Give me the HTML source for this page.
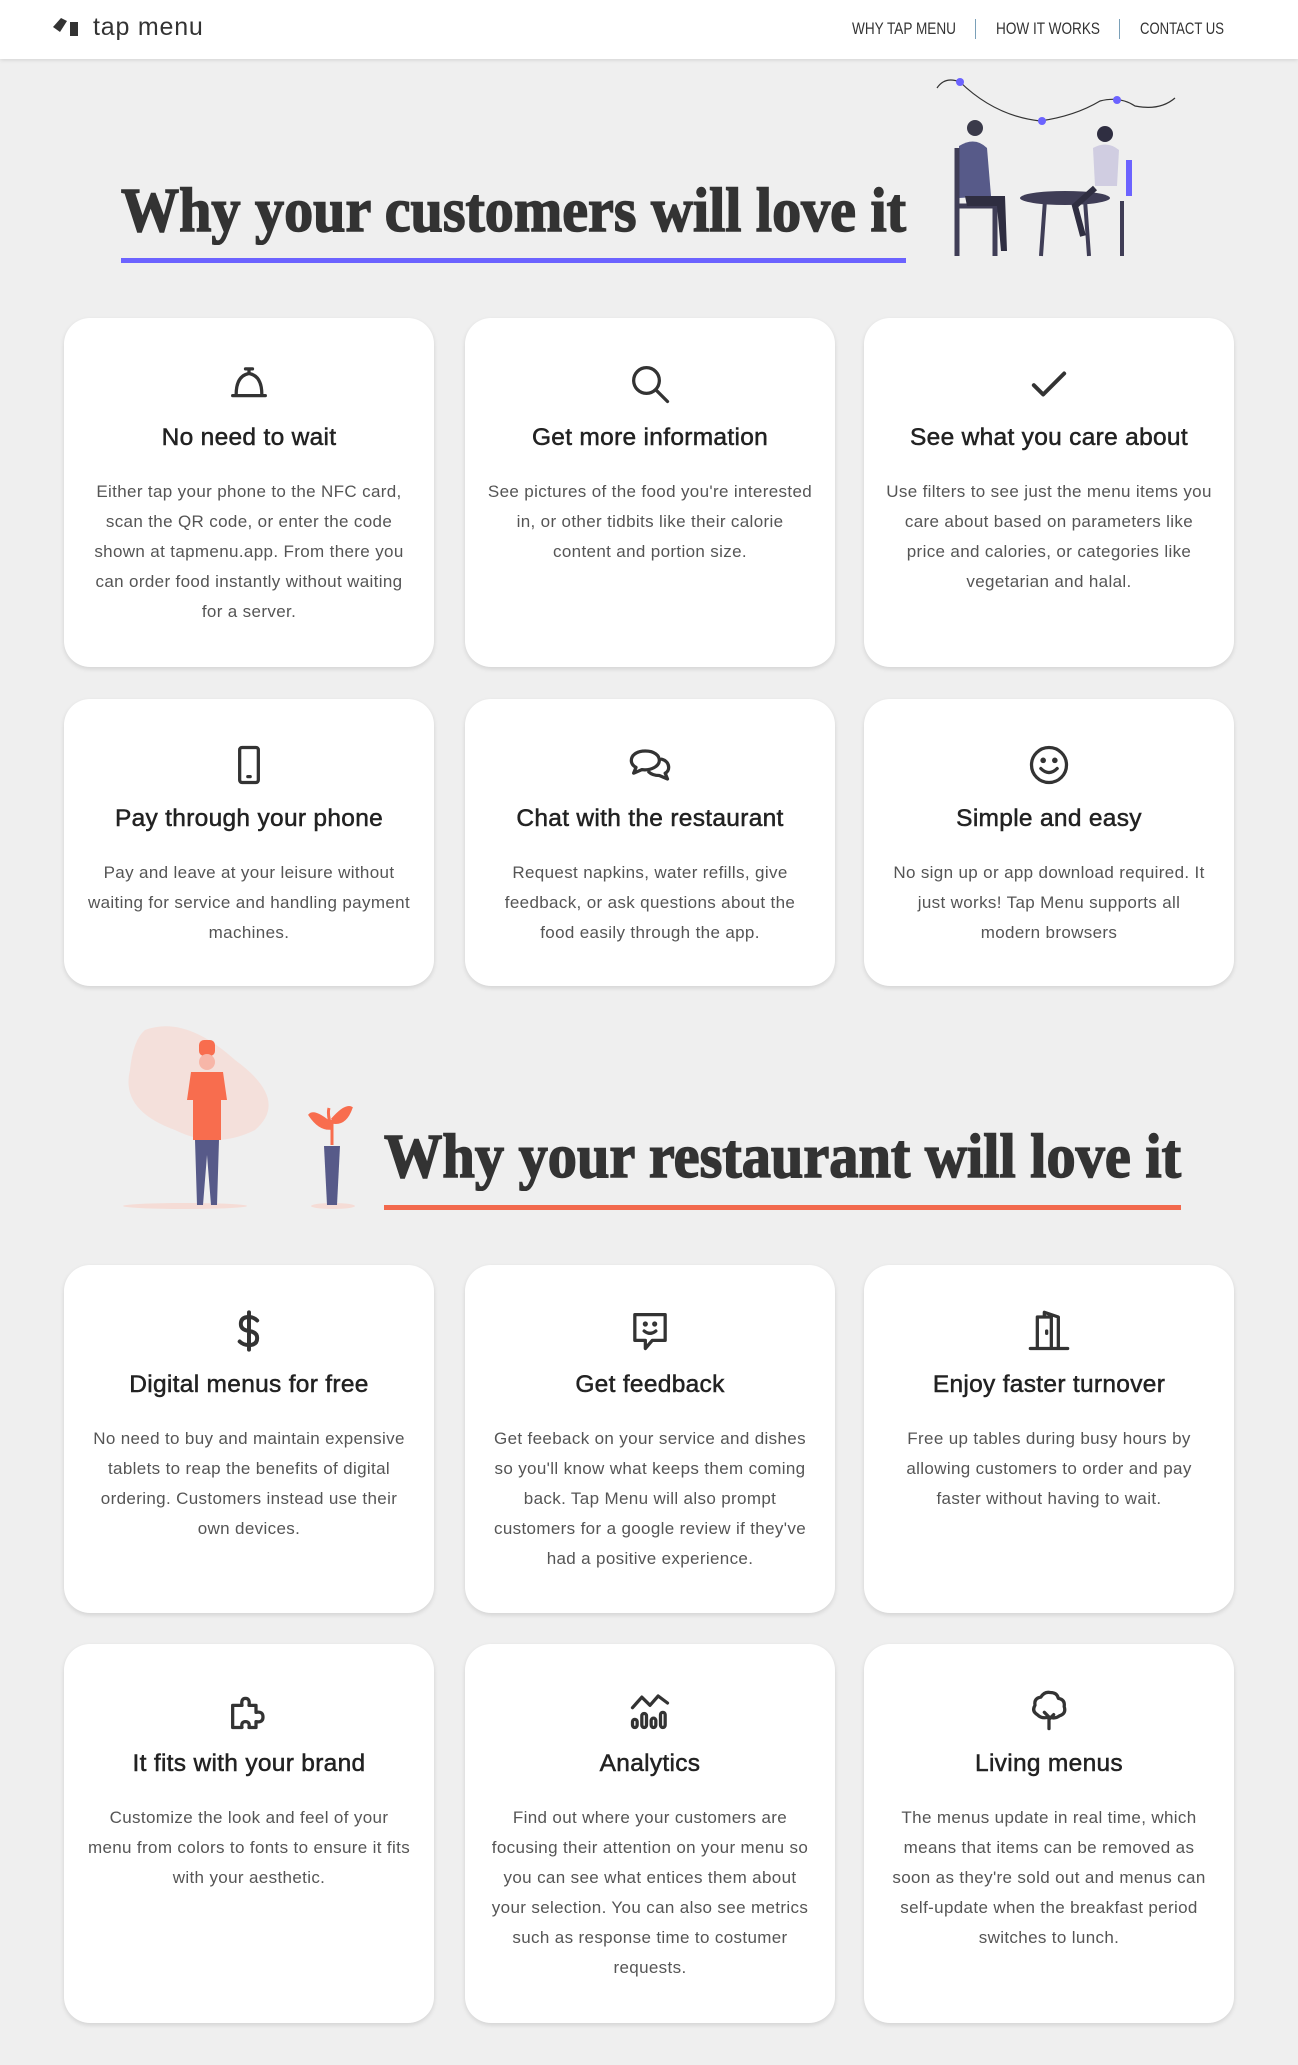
<!DOCTYPE html>
<html><head><meta charset="utf-8">
<style>
*{margin:0;padding:0;box-sizing:border-box}
body{width:1298px;height:2065px;background:#efefef;font-family:"Liberation Sans",sans-serif;position:relative;overflow:hidden;color:#333}
.hdr{position:absolute;left:0;top:0;width:1298px;height:59px;background:#fff;box-shadow:0 1px 4px rgba(0,0,0,.12)}
.logo{position:absolute;left:53px;top:13px;font-size:25px;color:#333;letter-spacing:0.8px}
.nav{position:absolute;top:19px;font-size:17px;color:#333;white-space:nowrap;transform-origin:left top}
.sep{position:absolute;top:19px;width:1px;height:20px;background:#7aa0b8}
.ttl{position:absolute;font-family:"Liberation Serif",serif;font-weight:bold;font-size:62px;color:#333;white-space:nowrap;transform-origin:left top;line-height:1;-webkit-text-stroke:1.5px #333}
.ul{position:absolute;height:5px}
.card{position:absolute;width:370px;background:#fff;border-radius:26px;box-shadow:0 2px 5px rgba(0,0,0,.12);text-align:center}
.card svg{position:absolute;left:164px;top:45px;width:42px;height:42px;fill:none;stroke:#333;stroke-width:2.8;stroke-linecap:round;stroke-linejoin:round}
.card h3{position:absolute;left:0;right:0;top:106px;font-size:24.5px;font-weight:normal;color:#222;letter-spacing:.3px;-webkit-text-stroke:.5px #222}
.card p{position:absolute;left:22px;right:22px;top:159px;font-size:17px;line-height:30px;color:#555;letter-spacing:.35px}
</style></head><body>
<div class="hdr">
<svg style="position:absolute;left:53px;top:17px" width="32" height="22" viewBox="0 0 32 22"><path d="M0 10 L8 1 L14 4 L7 15 Z" fill="#333"/><rect x="17" y="5" width="8" height="14" fill="#333"/></svg>
<div class="logo" style="left:93px">tap menu</div>
<div class="nav" data-w="104" style="left:852px">WHY TAP MENU</div>
<div class="sep" style="left:975px"></div>
<div class="nav" data-w="104" style="left:996px">HOW IT WORKS</div>
<div class="sep" style="left:1119px"></div>
<div class="nav" data-w="84" style="left:1140px">CONTACT US</div>
</div>

<div class="ttl" data-w="785" style="left:121px;top:180px">Why your customers will love it</div>
<div class="ul" style="left:121px;top:258px;width:785px;background:#6c63ff"></div>

<svg style="position:absolute;left:935px;top:76px" width="245" height="188" viewBox="0 0 245 188">
<path d="M2 12 Q10 0 25 6 Q60 40 105 45 Q140 40 165 25 Q185 20 200 30 Q225 35 240 22" stroke="#333" stroke-width="1.2" fill="none"/>
<circle cx="25" cy="6" r="4" fill="#6c63ff"/><circle cx="107" cy="45" r="4" fill="#6c63ff"/><circle cx="182" cy="24" r="4" fill="#6c63ff"/>
<circle cx="40" cy="52" r="8" fill="#3a3a4a"/><path d="M24 70 Q40 60 52 72 L56 120 L24 122 Z" fill="#575a89"/>
<path d="M22 72 L22 180 M22 130 L60 130 M60 130 L60 180" stroke="#3f3d56" stroke-width="5"/>
<path d="M30 120 L70 120 L72 175 L66 175 L62 130 L32 130 Z" fill="#2f2e41"/>
<circle cx="170" cy="58" r="8" fill="#2f2e41"/><path d="M158 72 Q172 64 184 74 L182 110 L160 110 Z" fill="#d0cde1"/>
<ellipse cx="130" cy="122" rx="45" ry="7" fill="#3f3d56"/><path d="M110 124 L106 180 M150 124 L154 180" stroke="#3f3d56" stroke-width="4"/>
<path d="M160 112 L140 130 L148 160" stroke="#2f2e41" stroke-width="6" fill="none"/>
<rect x="191" y="84" width="6" height="36" fill="#6c63ff"/><path d="M187 125 L187 180" stroke="#3f3d56" stroke-width="4"/>
</svg>

<div class="card" style="left:64px;top:318px;height:349px">
<svg viewBox="0 0 36 36"><path d="M15 5 L21 5 M18 5 L18 9 M7 27 Q7 11 18 9 Q29 11 29 27 M4 28 L32 28"/></svg>
<h3>No need to wait</h3><p>Either tap your phone to the NFC card, scan the QR code, or enter the code shown at tapmenu.app. From there you can order food instantly without waiting for a server.</p></div>
<div class="card" style="left:465px;top:318px;height:349px">
<svg viewBox="0 0 36 36"><circle cx="15" cy="15" r="11"/><path d="M23 23 L33 33"/></svg>
<h3>Get more information</h3><p>See pictures of the food you're interested in, or other tidbits like their calorie content and portion size.</p></div>
<div class="card" style="left:864px;top:318px;height:349px">
<svg viewBox="0 0 36 36"><path d="M5 19 L13 27 L31 9" stroke-width="3.4"/></svg>
<h3>See what you care about</h3><p>Use filters to see just the menu items you care about based on parameters like price and calories, or categories like vegetarian and halal.</p></div>

<div class="card" style="left:64px;top:699px;height:287px">
<svg viewBox="0 0 36 36"><rect x="10" y="3" width="16" height="30" rx="2"/><path d="M17 28 L19 28"/></svg>
<h3>Pay through your phone</h3><p>Pay and leave at your leisure without waiting for service and handling payment machines.</p></div>
<div class="card" style="left:465px;top:699px;height:287px">
<svg viewBox="0 0 36 36"><path d="M14 6 C6 6 2 10 2 14 C2 17 4 19 6 20 L4 25 L11 22 C19 23 26 19 26 14 C26 10 22 6 14 6 Z"/><path d="M28 13 C32 14 34 17 34 20 C34 22 33 24 31 25 L33 30 L26 27 C22 27 19 26 17 24"/></svg>
<h3>Chat with the restaurant</h3><p>Request napkins, water refills, give feedback, or ask questions about the food easily through the app.</p></div>
<div class="card" style="left:864px;top:699px;height:287px">
<svg viewBox="0 0 36 36"><circle cx="18" cy="18" r="15"/><circle cx="13" cy="14" r="1" fill="#333"/><circle cx="23" cy="14" r="1" fill="#333"/><path d="M11 21 Q18 28 25 21"/></svg>
<h3>Simple and easy</h3><p>No sign up or app download required. It just works! Tap Menu supports all modern browsers</p></div>

<svg style="position:absolute;left:115px;top:1020px" width="260" height="192" viewBox="0 0 260 192">
<path d="M30 10 Q70 -5 120 40 Q175 80 140 110 Q100 130 60 110 Q5 90 15 50 Q18 20 30 10 Z" fill="#f5dcd6" opacity=".8"/>
<ellipse cx="70" cy="186" rx="62" ry="3" fill="#f5dcd6"/><ellipse cx="218" cy="186" rx="22" ry="3" fill="#f5dcd6"/>
<rect x="84" y="20" width="16" height="16" rx="5" fill="#f86d4e"/><circle cx="92" cy="42" r="8" fill="#f7b6a8"/>
<path d="M76 52 L108 52 L112 80 L106 80 L106 120 L78 120 L78 80 L72 80 Z" fill="#f86d4e"/>
<path d="M80 120 L82 185 L88 185 L92 135 L96 185 L102 185 L104 120 Z" fill="#575a89"/>
<path d="M217 125 L217 100 M217 105 Q200 90 195 95 Q205 110 217 108 M217 100 Q230 85 236 88 Q230 105 217 102 M217 110 Q212 95 214 88" stroke="#f86d4e" stroke-width="3" fill="#f86d4e"/>
<path d="M209 126 L225 126 L222 185 L212 185 Z" fill="#575a89"/>
</svg>

<div class="ttl" data-w="797" style="left:384px;top:1126px">Why your restaurant will love it</div>
<div class="ul" style="left:384px;top:1205px;width:797px;background:#f2694d"></div>

<div class="card" style="left:64px;top:1265px;height:348px">
<svg viewBox="0 0 36 36"><path d="M25 9 Q22 6 18 6 Q11 6 11 12 Q11 17 18 18 Q25 19 25 24 Q25 30 18 30 Q13 30 10 27 M18 2 L18 34" stroke-width="3.4"/></svg>
<h3>Digital menus for free</h3><p>No need to buy and maintain expensive tablets to reap the benefits of digital ordering. Customers instead use their own devices.</p></div>
<div class="card" style="left:465px;top:1265px;height:348px">
<svg viewBox="0 0 36 36"><path d="M5 4 L31 4 L31 26 L20 26 L14 33 L14 26 L5 26 Z"/><circle cx="14" cy="12" r=".8" fill="#333"/><circle cx="22" cy="12" r=".8" fill="#333"/><path d="M13 18 Q18 22 23 18"/></svg>
<h3>Get feedback</h3><p>Get feeback on your service and dishes so you'll know what keeps them coming back. Tap Menu will also prompt customers for a google review if they've had a positive experience.</p></div>
<div class="card" style="left:864px;top:1265px;height:348px">
<svg viewBox="0 0 36 36"><path d="M2 33 L34 33 M8 33 L8 6 L20 6 L20 33 M14 2 L26 6 L26 33 M14 2 L14 6 M16 18 L16 20"/></svg>
<h3>Enjoy faster turnover</h3><p>Free up tables during busy hours by allowing customers to order and pay faster without having to wait.</p></div>

<div class="card" style="left:64px;top:1644px;height:379px">
<svg viewBox="0 0 36 36"><path d="M4 14 L12 14 Q11 8 15 8 Q19 8 18 14 L24 14 L24 20 Q30 19 30 24 Q30 29 24 28 L24 33 L18 33 Q19 28 15 28 Q11 28 12 33 L4 33 Z"/></svg>
<h3>It fits with your brand</h3><p>Customize the look and feel of your menu from colors to fonts to ensure it fits with your aesthetic.</p></div>
<div class="card" style="left:465px;top:1644px;height:379px">
<svg viewBox="0 0 36 36"><path d="M3 16 L11 7 L18 14 L25 6 L33 12"/><rect x="3" y="26" width="4" height="7" rx="2"/><rect x="11" y="21" width="4" height="12" rx="2"/><rect x="19" y="25" width="4" height="8" rx="2"/><rect x="27" y="20" width="4" height="13" rx="2"/></svg>
<h3>Analytics</h3><p>Find out where your customers are focusing their attention on your menu so you can see what entices them about your selection. You can also see metrics such as response time to costumer requests.</p></div>
<div class="card" style="left:864px;top:1644px;height:379px">
<svg viewBox="0 0 36 36"><path d="M18 34 L18 24 M18 24 Q12 26 8 22 Q3 19 6 14 Q5 8 11 7 Q14 2 19 3 Q25 3 26 8 Q32 9 31 15 Q33 21 27 23 Q23 26 18 24 M18 24 L14 20 M18 26 L22 22"/></svg>
<h3>Living menus</h3><p>The menus update in real time, which means that items can be removed as soon as they're sold out and menus can self-update when the breakfast period switches to lunch.</p></div>

<script>
document.querySelectorAll('[data-w]').forEach(function(e){var w=e.getBoundingClientRect().width;var t=+e.getAttribute('data-w');e.style.transform='scaleX('+(t/w)+')';});
</script>
</body></html>
